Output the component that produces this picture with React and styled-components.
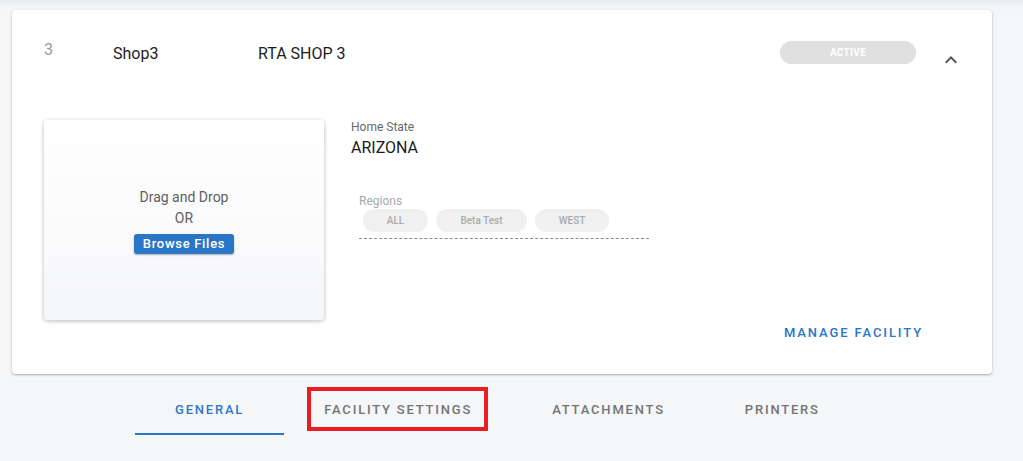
import React from "react";
import styled, { createGlobalStyle } from "styled-components";

const Global = createGlobalStyle`
  html, body { margin: 0; padding: 0; }
  body {
    background: linear-gradient(#e9eaec 0px, #f4f5f7 7px, #f5f6f8 12px);
    font-family: Roboto, "Noto Sans", Arial, sans-serif;
    width: 1023px; height: 461px; overflow: hidden;
  }
`;

const Page = styled.div`
  padding: 10px 31px 0 12px;
`;

const Card = styled.div`
  background: #fff;
  border-radius: 4px;
  box-shadow: 0 1px 3px rgba(0,0,0,0.25), 0 1px 1px rgba(0,0,0,0.08);
  padding: 31px 30px 24px 32px;
  height: 364px;
  box-sizing: border-box;
`;

const Header = styled.div`
  display: flex;
  align-items: flex-start;
  height: 34px;
`;

const Num = styled.div`
  width: 69px;
  font-size: 16px;
  color: #9a9a9a;
  line-height: 18px;
`;

const Cell = styled.div`
  width: ${p => p.$w ? p.$w + "px" : "auto"};
  flex: ${p => p.$w ? "none" : 1};
  font-size: 16px;
  color: #1c1c1c;
  line-height: 18px;
  padding-top: 4px;
`;

const Pill = styled.div`
  width: 136px;
  height: 23px;
  border-radius: 12px;
  background: #e0e0e0;
  color: #fff;
  font-size: 10px;
  font-weight: 700;
  letter-spacing: 0.3px;
  display: flex;
  align-items: center;
  justify-content: center;
`;

const Chevron = styled.div`
  width: 24px;
  height: 24px;
  margin: 7px -1px 0 23px;
  display: flex;
  align-items: center;
  justify-content: center;
`;

const Body = styled.div`
  display: grid;
  grid-template-columns: 280px 1fr;
  column-gap: 27px;
  margin-top: 45px;
  align-items: start;
`;

const Drop = styled.div`
  height: 200px;
  border-radius: 4px;
  background: linear-gradient(#ffffff, #f5f6f8);
  box-shadow: 0 1px 4px rgba(0,0,0,0.28);
  display: flex;
  flex-direction: column;
  align-items: center;
  justify-content: center;
`;

const DropText = styled.div`
  font-size: 14px;
  color: #5f5f5f;
  line-height: 21px;
`;

const BrowseBtn = styled.button`
  margin-top: 5px;
  width: 100px;
  height: 20px;
  border: none;
  border-radius: 3px;
  background: #2a76c6;
  color: #fff;
  font-family: inherit;
  font-size: 13px;
  font-weight: 500;
  letter-spacing: 0.7px;
  padding: 0;
  box-shadow: 0 1px 2px rgba(0,0,0,0.3);
`;

const Details = styled.div`
  display: flex;
  flex-direction: column;
`;

const Label = styled.div`
  font-size: 12px;
  color: #666;
  line-height: 14px;
`;

const Value = styled.div`
  font-size: 16px;
  color: #1a1a1a;
  line-height: 19px;
  margin-top: 4px;
`;

const Regions = styled.div`
  margin: 37px 0 0 8px;
  width: 290px;
  border-bottom: 1px dashed #8a8a8a;
  padding-bottom: 6px;
`;

const RegionLabel = styled.div`
  font-size: 12px;
  color: #a8a8a8;
  line-height: 14px;
`;

const Chips = styled.div`
  display: flex;
  gap: 8px;
  margin: 1px 0 0 4px;
`;

const Chip = styled.div`
  width: ${p => p.$w}px;
  height: 23px;
  border-radius: 12px;
  background: #f0f0f0;
  color: #ababab;
  font-size: 10px;
  font-weight: 500;
  display: flex;
  align-items: center;
  justify-content: center;
`;

const ManageRow = styled.div`
  display: flex;
  justify-content: flex-end;
  margin-top: 80px;
  padding-right: 39px;
`;

const ManageBtn = styled.button`
  background: none;
  border: none;
  color: #2a76c6;
  font-family: inherit;
  font-size: 13px;
  font-weight: 500;
  letter-spacing: 1.9px;
  padding: 6px 0;
`;

const Tabs = styled.div`
  display: flex;
  padding-left: 123px;
  margin-top: 15px;
`;

const Tab = styled.div`
  position: relative;
  padding: 13px 40px 0;
  height: 46px;
  box-sizing: border-box;
  font-size: 13px;
  font-weight: 500;
  letter-spacing: 1.8px;
  color: ${p => p.$active ? "#3079c4" : "#747474"};
  border-bottom: 2px solid ${p => p.$active ? "#2a76c6" : "transparent"};
  white-space: nowrap;
`;

const Highlight = styled.span`
  position: relative;
  &::after {
    content: "";
    position: absolute;
    left: -17px;
    right: -16px;
    top: -15px;
    bottom: -14px;
    border: 4px solid #ec1c24;
  }
`;

export default function App() {
  return (
    <>
      <Global />
      <Page>
        <Card>
          <Header>
            <Num>3</Num>
            <Cell $w={145}>Shop3</Cell>
            <Cell>RTA SHOP 3</Cell>
            <Pill>ACTIVE</Pill>
            <Chevron>
              <svg width="24" height="24" viewBox="0 0 24 24">
                <path d="M12 8l-6 6 1.41 1.41L12 10.83l4.59 4.58L18 14z" fill="#555" />
              </svg>
            </Chevron>
          </Header>
          <Body>
            <Drop>
              <DropText>Drag and Drop</DropText>
              <DropText>OR</DropText>
              <BrowseBtn>Browse Files</BrowseBtn>
            </Drop>
            <Details>
              <Label>Home State</Label>
              <Value>ARIZONA</Value>
              <Regions>
                <RegionLabel>Regions</RegionLabel>
                <Chips>
                  <Chip $w={65}>ALL</Chip>
                  <Chip $w={91}>Beta Test</Chip>
                  <Chip $w={74}>WEST</Chip>
                </Chips>
              </Regions>
              <ManageRow>
                <ManageBtn>MANAGE FACILITY</ManageBtn>
              </ManageRow>
            </Details>
          </Body>
        </Card>
        <Tabs>
          <Tab $active>GENERAL</Tab>
          <Tab><Highlight>FACILITY SETTINGS</Highlight></Tab>
          <Tab>ATTACHMENTS</Tab>
          <Tab>PRINTERS</Tab>
        </Tabs>
      </Page>
    </>
  );
}
